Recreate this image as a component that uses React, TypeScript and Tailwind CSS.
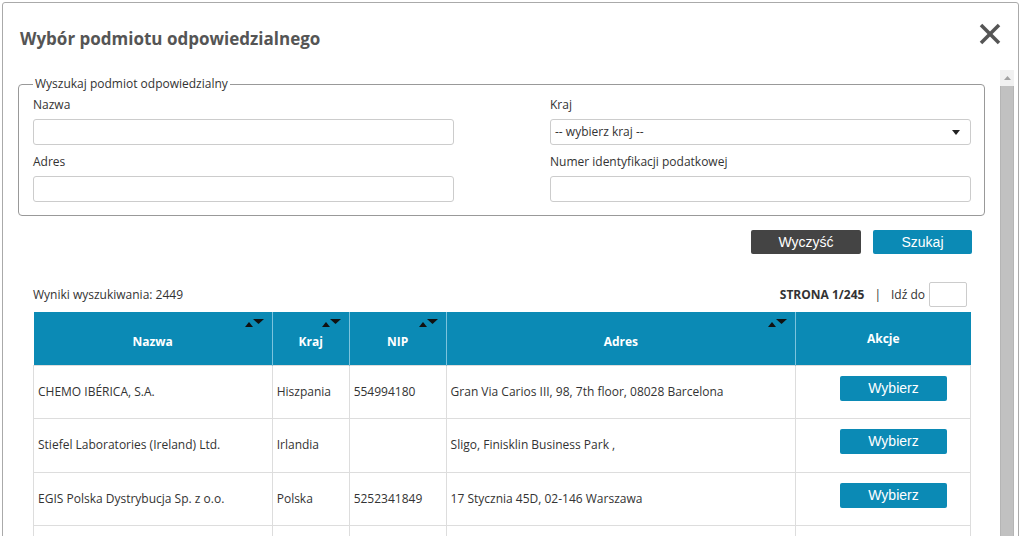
import React from 'react'

const rows = [
  { nazwa: 'CHEMO IBÉRICA, S.A.', kraj: 'Hiszpania', nip: '554994180', adres: 'Gran Via Carios III, 98, 7th floor, 08028 Barcelona' },
  { nazwa: 'Stiefel Laboratories (Ireland) Ltd.', kraj: 'Irlandia', nip: '', adres: 'Sligo, Finisklin Business Park ,' },
  { nazwa: 'EGIS Polska Dystrybucja Sp. z o.o.', kraj: 'Polska', nip: '5252341849', adres: '17 Stycznia 45D, 02-146 Warszawa' },
  { nazwa: '', kraj: '', nip: '', adres: '' },
]

function SortArrows() {
  return (
    <svg width="20" height="9" viewBox="0 0 20 9" className="absolute right-[7px] top-[7px]">
      <polygon points="0,8 4,3 8,8" fill="#111" />
      <polygon points="8,0 19,0 13.5,5" fill="#111" />
    </svg>
  )
}

function Field({ label, select }: { label: string; select?: boolean }) {
  return (
    <div className="flex flex-col">
      <div className="h-[15px] text-[12px] leading-[15px] text-[#333]">{label}</div>
      <div className="mt-[7px] h-[26px] rounded-[3px] border border-[#ccc] bg-white flex items-center justify-between px-[4px]">
        {select ? (
          <>
            <span className="text-[12px] text-[#333]">-- wybierz kraj --</span>
            <svg width="8" height="5" viewBox="0 0 8 5" className="mr-[6px]">
              <polygon points="0,0 8,0 4,5" fill="#222" />
            </svg>
          </>
        ) : null}
      </div>
    </div>
  )
}

export default function App() {
  return (
    <div className="w-[1024px] h-[536px] overflow-hidden bg-white" style={{ fontFamily: '"Open Sans", "Noto Sans", sans-serif' }}>
      <div className="h-[2px] bg-white" />
      <div className="ml-[2px] w-[1017px] border border-[#aaa] rounded-[3px] bg-white flex flex-col">
        <div className="h-[67px] shrink-0 flex items-start justify-between pl-[17px] pr-[17px]">
          <div className="mt-[24px] text-[17px] font-bold text-[#555] leading-[24px]">Wybór podmiotu odpowiedzialnego</div>
          <svg width="22" height="22" viewBox="0 0 22 22" className="mt-[20px]">
            <line x1="2" y1="2" x2="20" y2="20" stroke="#555" strokeWidth="3.6" />
            <line x1="20" y1="2" x2="2" y2="20" stroke="#555" strokeWidth="3.6" />
          </svg>
        </div>
        <div className="flex">
          <div className="w-[982px] pl-[15px]">
            <fieldset className="mt-[7px] border border-[#999] rounded-[4px] pl-[14px] pr-[13px] pb-[13px] pt-[6px]">
              <legend className="px-[2px] text-[12px] text-[#333] leading-[14px]">Wyszukaj podmiot odpowiedzialny</legend>
              <div className="grid grid-cols-2 gap-x-[96px] gap-y-[9px]">
                <Field label="Nazwa" />
                <Field label="Kraj" select />
                <Field label="Adres" />
                <Field label="Numer identyfikacji podatkowej" />
              </div>
            </fieldset>
            <div className="mt-[14px] flex justify-end gap-[12px] pr-[13px]">
              <button className="w-[110px] h-[24px] rounded-[2px] bg-[#444] text-white text-[14px]" style={{ fontFamily: '"Liberation Sans", Arial, sans-serif' }}>Wyczyść</button>
              <button className="w-[99px] h-[24px] rounded-[2px] bg-[#0b8ab5] text-white text-[14px]" style={{ fontFamily: '"Liberation Sans", Arial, sans-serif' }}>Szukaj</button>
            </div>
            <div className="mt-[28px] pl-[15px] pr-[18px] flex items-end justify-between">
              <div className="text-[12px] text-[#333] pb-[3px]">Wyniki wyszukiwania: 2449</div>
              <div className="flex items-center text-[12px] text-[#333]">
                <span className="font-bold">STRONA 1/245</span>
                <span className="mx-[10px]">|</span>
                <span>Idź do</span>
                <div className="ml-[4px] w-[38px] h-[25px] rounded-[2px] border border-[#ccc] bg-white" />
              </div>
            </div>
            <table className="ml-[15px] mt-[5px] w-[938px] border-collapse text-[12px] text-[#333]">
              <thead>
                <tr className="h-[53px] bg-[#0b8ab5] text-white font-bold">
                  <th className="relative w-[239px] pt-[7px] border-r border-[#7cc3dd]">Nazwa<SortArrows /></th>
                  <th className="relative w-[77px] pt-[7px] border-r border-[#7cc3dd]">Kraj<SortArrows /></th>
                  <th className="relative w-[97px] pt-[7px] border-r border-[#7cc3dd]">NIP<SortArrows /></th>
                  <th className="relative w-[350px] pt-[7px] border-r border-[#7cc3dd]">Adres<SortArrows /></th>
                  <th className="w-[175px] pt-[2px]">Akcje</th>
                </tr>
              </thead>
              <tbody>
                {rows.map((r, i) => (
                  <tr key={i} className="h-[53.5px]">
                    <td className="border border-[#ddd] pl-[4px]">{r.nazwa}</td>
                    <td className="border border-[#ddd] pl-[4px]">{r.kraj}</td>
                    <td className="border border-[#ddd] pl-[4px]">{r.nip}</td>
                    <td className="border border-[#ddd] pl-[4px]">{r.adres}</td>
                    <td className="border border-[#ddd] align-top pt-[10px]">
                      <div className="flex justify-end pr-[23px]">
                        <button className="w-[107px] h-[25px] rounded-[2px] bg-[#0b8ab5] text-white text-[14px]" style={{ fontFamily: '"Liberation Sans", Arial, sans-serif' }}>Wybierz</button>
                      </div>
                    </td>
                  </tr>
                ))}
              </tbody>
            </table>
          </div>
          <div className="ml-[15px] w-[14px] flex flex-col">
            <div className="h-[16px] bg-[#f1f1f1] flex items-center justify-center">
              <svg width="7" height="4" viewBox="0 0 7 4"><polygon points="0,4 7,4 3.5,0" fill="#a3a3a3" /></svg>
            </div>
            <div className="flex-1 bg-[#c1c1c1] border-x border-[#b5b5b5]" />
          </div>
        </div>
      </div>
    </div>
  )
}
